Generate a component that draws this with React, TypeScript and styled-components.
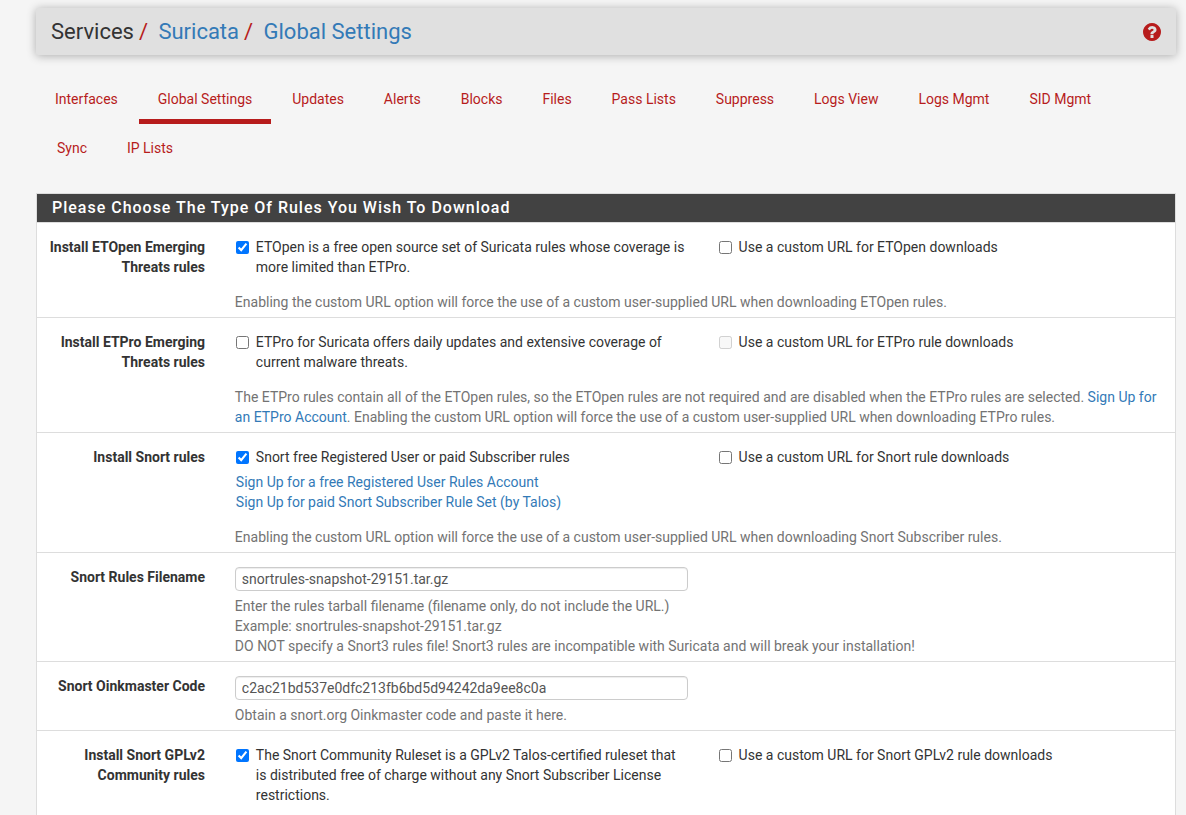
import React from 'react';
import styled, { createGlobalStyle, css } from 'styled-components';

const GlobalStyle = createGlobalStyle`
  *, *::before, *::after { box-sizing: border-box; }
  html { overflow: hidden; }
  body {
    margin: 0;
    height: 815px;
    overflow: hidden;
    background: #f5f5f5;
    color: #333;
    font: 14px/20px Roboto, sans-serif;
  }
`;

const Page = styled.div`
  width: 1140px;
  margin-left: 36px;
  padding-top: 8px;
`;

const Header = styled.header`
  display: flex;
  align-items: center;
  justify-content: space-between;
  height: 47px;
  padding: 0 15px;
  border-radius: 2px;
  background: #e0e0e0;
  box-shadow: 0 1px 10px rgba(0, 0, 0, 0.3);
`;

const Breadcrumb = styled.ol`
  display: flex;
  margin: 0;
  padding: 0;
  list-style: none;
  font-size: 22px;
  line-height: 24px;
`;

const Crumb = styled.li`
  & + &::before {
    content: '/';
    padding: 0 10.4px 0 5px;
    color: #b71c1c;
  }
`;

const Link = styled.a`
  color: #337ab7;
  text-decoration: none;
`;

const HelpLink = styled.a`
  display: flex;
  color: #b71c1c;
  padding-top: 1px;
`;

const Tabs = styled.ul`
  display: flex;
  flex-wrap: wrap;
  margin: 20px 0;
  padding: 0;
  list-style: none;
`;

const Tab = styled.li<{ $active?: boolean }>`
  padding: 14px 19px 10px;
  border-bottom: 5px solid ${p => (p.$active ? '#b71c1c' : 'transparent')};
  & + & { margin-left: 1.97px; }
`;

const TabLink = styled.a`
  color: #b71c1c;
  text-decoration: none;
`;

const Panel = styled.section`
  border: 1px solid #ddd;
  background: #fff;
`;

const PanelTitle = styled.h2`
  margin: 0;
  height: 29px;
  padding: 0 15px;
  border-bottom: 1px solid #ddd;
  background: #424242;
  background-clip: padding-box;
  color: #fff;
  font-size: 16px;
  font-weight: 500;
  line-height: 27px;
  letter-spacing: 0.99px;
`;

const Row = styled.div`
  display: grid;
  grid-template-columns: 182.85px 1fr;
  padding: 14px 0 5px;
  border-bottom: 1px solid #ddd;
  &:last-child { padding-bottom: 40px; }
`;

const RowLabel = styled.div`
  padding: 0 14.85px 0 10px;
  text-align: right;
  font-weight: 700;
`;

const Fields = styled.div`
  display: grid;
  grid-template-columns: 453px 1fr;
  column-gap: 29.75px;
  padding: 0 15px;
`;

const Field = styled.div``;

const CheckLabel = styled.label`
  display: flex;
  align-items: flex-start;
  padding-left: 1px;
`;

const Checkbox = styled.input.attrs({ type: 'checkbox' })`
  flex: none;
  width: 13px;
  height: 13px;
  margin: 4px 7px 0 0;
`;

const SignUps = styled.div`
  display: flex;
  flex-direction: column;
  margin-top: 5px;
  padding-left: 1px;
`;

const Help = styled.div<{ $spaced?: boolean }>`
  grid-column: 1 / -1;
  margin-top: 5px;
  color: #737373;
  ${p => p.$spaced && css`margin-top: 15px;`}
`;

const TextInput = styled.input.attrs({ type: 'text' })`
  display: block;
  width: 100%;
  height: 24px;
  padding: 0 6px;
  border: 1px solid #ccc;
  border-radius: 4px;
  background: #fff;
  box-shadow: inset 0 1px 1px rgba(0, 0, 0, 0.075);
  color: #555;
  font: inherit;
`;

const tabs = [
  'Interfaces', 'Global Settings', 'Updates', 'Alerts', 'Blocks', 'Files', 'Pass Lists',
  'Suppress', 'Logs View', 'Logs Mgmt', 'SID Mgmt', 'Sync', 'IP Lists',
];

const HelpIcon = () => (
  <svg width="18" height="18" viewBox="128 128 1536 1536" fill="currentColor">
    <path d="M1024 1376v-192q0-14-9-23t-23-9h-192q-14 0-23 9t-9 23v192q0 14 9 23t23 9h192q14 0 23-9t9-23zM1280 704q0-88-55.5-163t-138.5-116t-170-41q-243 0-371 213q-15 24 8 42l132 100q7 6 19 6q16 0 25-12q53-68 86-92q34-24 86-24q48 0 85.5 26t37.5 59q0 38-20 61t-68 45q-63 28-115.5 86.5t-52.5 125.5v36q0 14 9 23t23 9h192q14 0 23-9t9-23q0-19 21.5-49.5t54.5-49.5q32-18 49-28.5t46-35t44.5-48t28-60.5t12.5-81zM1664 896q0 209-103 385.5t-279.5 279.5t-385.5 103t-385.5-103t-279.5-279.5t-103-385.5t103-385.5t279.5-279.5t385.5-103t385.5 103t279.5 279.5t103 385.5z" />
  </svg>
);

interface CheckProps {
  checked?: boolean;
  disabled?: boolean;
  children: React.ReactNode;
}

const Check = ({ checked, disabled, children }: CheckProps) => (
  <CheckLabel>
    <Checkbox defaultChecked={checked} disabled={disabled} />
    <span>{children}</span>
  </CheckLabel>
);

export default function App() {
  return (
    <>
      <GlobalStyle />
      <Page>
        <Header>
          <Breadcrumb>
            <Crumb>Services</Crumb>
            <Crumb><Link href="#">Suricata</Link></Crumb>
            <Crumb><Link href="#">Global Settings</Link></Crumb>
          </Breadcrumb>
          <HelpLink href="#" aria-label="Help"><HelpIcon /></HelpLink>
        </Header>

        <Tabs>
          {tabs.map(name => (
            <Tab key={name} $active={name === 'Global Settings'}>
              <TabLink href="#">{name}</TabLink>
            </Tab>
          ))}
        </Tabs>

        <Panel>
          <PanelTitle>Please Choose The Type Of Rules You Wish To Download</PanelTitle>

          <Row>
            <RowLabel>Install ETOpen Emerging Threats rules</RowLabel>
            <Fields>
              <Check checked>
                ETOpen is a free open source set of Suricata rules whose coverage is more limited than ETPro.
              </Check>
              <Check>Use a custom URL for ETOpen downloads</Check>
              <Help $spaced>
                Enabling the custom URL option will force the use of a custom user-supplied URL when downloading ETOpen rules.
              </Help>
            </Fields>
          </Row>

          <Row>
            <RowLabel>Install ETPro Emerging Threats rules</RowLabel>
            <Fields>
              <Check>
                ETPro for Suricata offers daily updates and extensive coverage of current malware threats.
              </Check>
              <Check disabled>Use a custom URL for ETPro rule downloads</Check>
              <Help $spaced>
                The ETPro rules contain all of the ETOpen rules, so the ETOpen rules are not required and are disabled
                when the ETPro rules are selected. <Link href="#">Sign Up for an ETPro Account</Link>. Enabling the
                custom URL option will force the use of a custom user-supplied URL when downloading ETPro rules.
              </Help>
            </Fields>
          </Row>

          <Row>
            <RowLabel>Install Snort rules</RowLabel>
            <Fields>
              <Field>
                <Check checked>Snort free Registered User or paid Subscriber rules</Check>
                <SignUps>
                  <Link href="#">Sign Up for a free Registered User Rules Account</Link>
                  <Link href="#">Sign Up for paid Snort Subscriber Rule Set (by Talos)</Link>
                </SignUps>
              </Field>
              <Check>Use a custom URL for Snort rule downloads</Check>
              <Help $spaced>
                Enabling the custom URL option will force the use of a custom user-supplied URL when downloading Snort
                Subscriber rules.
              </Help>
            </Fields>
          </Row>

          <Row>
            <RowLabel>Snort Rules Filename</RowLabel>
            <Fields>
              <TextInput defaultValue="snortrules-snapshot-29151.tar.gz" />
              <Help>
                Enter the rules tarball filename (filename only, do not include the URL.)<br />
                Example: snortrules-snapshot-29151.tar.gz<br />
                DO NOT specify a Snort3 rules file! Snort3 rules are incompatible with Suricata and will break your
                installation!
              </Help>
            </Fields>
          </Row>

          <Row>
            <RowLabel>Snort Oinkmaster Code</RowLabel>
            <Fields>
              <TextInput defaultValue="c2ac21bd537e0dfc213fb6bd5d94242da9ee8c0a" />
              <Help>Obtain a snort.org Oinkmaster code and paste it here.</Help>
            </Fields>
          </Row>

          <Row>
            <RowLabel>Install Snort GPLv2 Community rules</RowLabel>
            <Fields>
              <Check checked>
                The Snort Community Ruleset is a GPLv2 Talos-certified ruleset that is distributed free of charge
                without any Snort Subscriber License restrictions.
              </Check>
              <Check>Use a custom URL for Snort GPLv2 rule downloads</Check>
            </Fields>
          </Row>
        </Panel>
      </Page>
    </>
  );
}
